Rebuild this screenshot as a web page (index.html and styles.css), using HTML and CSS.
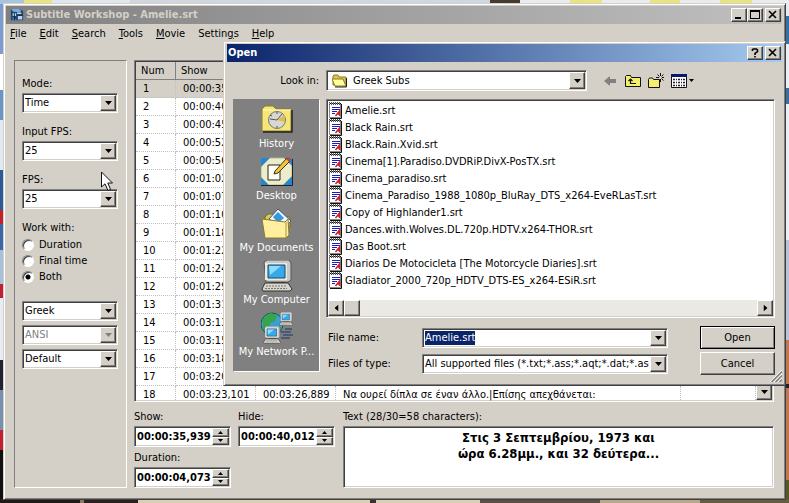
FILE: index.html
```html
<!DOCTYPE html>
<html lang="en">
<head>
<meta charset="utf-8">
<title>Subtitle Workshop - Amelie.srt</title>
<link rel="stylesheet" href="styles.css">
</head>
<body>
<svg class="defs" aria-hidden="true">
  <symbol id="file" viewBox="0 0 16 17">
    <path d="M1.500 1.500h11v14h-11z" fill="#fff" stroke="#888"/>
    <path d="M13.500 2v14.500H2" fill="none" stroke="#111"/>
    <path d="M2 1.500h12" stroke="#111" stroke-dasharray="1 1"/>
    <path d="M1 .5h12M1 2.500h12" stroke="#555" stroke-dasharray="1 1"/>
    <path d="M4 5.500h8M4 7.500h8M4 9.500h5M4 11.500h3" stroke="#1b1bc5"/>
    <path d="M7.500 14L11.500 9v5M9 12h3" fill="none" stroke="#d02020" stroke-width="1.400"/>
  </symbol>
  <symbol id="down" viewBox="0 0 7 4"><path d="M0 0h7L3.500 4z"/></symbol>
  <symbol id="pc" viewBox="0 0 32 32">
    <path d="M3 2l3-2h22l2 3v17l-3 2H5z" fill="#c8c8c8" stroke="#555"/>
    <path d="M4 3h22v17H4z" fill="#eceadf"/>
    <path d="M7 5h17v13H7z" fill="#38a8e8" stroke="#134a70"/>
    <path d="M8 6h12L9 15z" fill="#8fdcff"/>
    <path d="M10 22h14v2H10z" fill="#444"/>
    <path d="M4 23h23l4 6-2 2H2l-1-2z" fill="#d8d5ca" stroke="#333"/>
    <path d="M5 26h20M4 28.500h22" stroke="#777" stroke-dasharray="2 1"/>
  </symbol>
</svg>

<main class="window">
  <header class="titlebar">
    <svg class="app-icon" viewBox="0 0 16 16" aria-hidden="true">
      <path d="M1 2h12l2 2v10H1z" fill="#1d4470"/>
      <path d="M2 1h8l3 2-2 2-8-1z" fill="#77aee0"/>
      <path d="M3 6h4v3H3zM8 5h5v2H8zM9 9h5v4H9z" fill="#b9d5ee"/>
      <path d="M3 10l5 4H3z" fill="#3e8ad2"/>
      <path d="M5 6v8M8 8h6" stroke="#10181f"/>
    </svg>
    <h1>Subtitle Workshop - Amelie.srt</h1>
    <button class="cap" aria-label="Minimize"><svg viewBox="0 0 10 10"><path d="M1 7h6v2H1z"/></svg></button>
    <button class="cap" aria-label="Maximize"><svg viewBox="0 0 10 10"><path d="M0 0h10v9H0zM1 2v6h8V2z" fill-rule="evenodd"/></svg></button>
    <button class="cap cap-close" aria-label="Close"><svg viewBox="0 0 10 10"><path d="M1 1l7 7M8 1L1 8" stroke="#000" stroke-width="1.600"/></svg></button>
  </header>

  <nav class="menu">
    <a href="#"><u>F</u>ile</a>
    <a href="#"><u>E</u>dit</a>
    <a href="#"><u>S</u>earch</a>
    <a href="#"><u>T</u>ools</a>
    <a href="#"><u>M</u>ovie</a>
    <a href="#">Settin<u>g</u>s</a>
    <a href="#"><u>H</u>elp</a>
  </nav>

  <div class="content">
    <aside class="panel">
      <label for="mode">Mode:</label>
      <span class="combo"><select id="mode"><option>Time</option></select><i class="drop"><svg><use href="#down"/></svg></i></span>
      <label for="infps">Input FPS:</label>
      <span class="combo"><select id="infps"><option>25</option></select><i class="drop"><svg><use href="#down"/></svg></i></span>
      <label for="fps">FPS:</label>
      <span class="combo"><select id="fps"><option>25</option></select><i class="drop"><svg><use href="#down"/></svg></i></span>
      <fieldset>
        <legend>Work with:</legend>
        <label><input type="radio" name="work">Duration</label>
        <label><input type="radio" name="work">Final time</label>
        <label><input type="radio" name="work" checked>Both</label>
      </fieldset>
      <div class="charsets">
        <span class="combo"><select aria-label="Original charset"><option>Greek</option></select><i class="drop"><svg><use href="#down"/></svg></i></span>
        <span class="combo off"><select aria-label="Encoding" disabled><option>ANSI</option></select><i class="drop"><svg><use href="#down"/></svg></i></span>
        <span class="combo"><select aria-label="Translation charset"><option>Default</option></select><i class="drop"><svg><use href="#down"/></svg></i></span>
      </div>
    </aside>

    <section class="editor">
      <div class="grid sunken">
        <table>
          <colgroup><col class="c-num"><col class="c-time"><col class="c-time"><col class="c-text"><col></colgroup>
          <thead><tr><th>Num</th><th>Show</th><th></th><th></th><th></th></tr></thead>
          <tbody>
            <tr class="current"><td>1</td><td>00:00:35</td><td></td><td></td><td></td></tr>
            <tr><td>2</td><td>00:00:40</td><td></td><td></td><td></td></tr>
            <tr><td>3</td><td>00:00:45</td><td></td><td></td><td></td></tr>
            <tr><td>4</td><td>00:00:52</td><td></td><td></td><td></td></tr>
            <tr><td>5</td><td>00:00:56</td><td></td><td></td><td></td></tr>
            <tr><td>6</td><td>00:01:02</td><td></td><td></td><td></td></tr>
            <tr><td>7</td><td>00:01:07</td><td></td><td></td><td></td></tr>
            <tr><td>8</td><td>00:01:10</td><td></td><td></td><td></td></tr>
            <tr><td>9</td><td>00:01:18</td><td></td><td></td><td></td></tr>
            <tr><td>10</td><td>00:01:22</td><td></td><td></td><td></td></tr>
            <tr><td>11</td><td>00:01:24</td><td></td><td></td><td></td></tr>
            <tr><td>12</td><td>00:01:29</td><td></td><td></td><td></td></tr>
            <tr><td>13</td><td>00:01:31</td><td></td><td></td><td></td></tr>
            <tr><td>14</td><td>00:03:13</td><td></td><td></td><td></td></tr>
            <tr><td>15</td><td>00:03:15</td><td></td><td></td><td></td></tr>
            <tr><td>16</td><td>00:03:18</td><td></td><td></td><td></td></tr>
            <tr><td>17</td><td>00:03:20</td><td></td><td></td><td></td></tr>
            <tr><td>18</td><td>00:03:23,101</td><td>00:03:26,889</td><td>Να ουρεί δίπλα σε έναν άλλο.|Επίσης απεχθάνεται:</td><td></td></tr>
          </tbody>
        </table>
        <div class="vscroll"><button class="drop" aria-label="Scroll down"><svg><use href="#down"/></svg></button></div>
      </div>

      <div class="fields">
        <div class="times">
          <div><label for="show">Show:</label>
            <span class="spin sunken"><input id="show" value="00:00:35,939"><span class="steps"><button aria-label="Show up"><svg class="up"><use href="#down"/></svg></button><button aria-label="Show down"><svg><use href="#down"/></svg></button></span></span></div>
          <div><label for="hide">Hide:</label>
            <span class="spin sunken"><input id="hide" value="00:00:40,012"><span class="steps"><button aria-label="Hide up"><svg class="up"><use href="#down"/></svg></button><button aria-label="Hide down"><svg><use href="#down"/></svg></button></span></span></div>
          <div><label for="dur">Duration:</label>
            <span class="spin sunken"><input id="dur" value="00:00:04,073"><span class="steps"><button aria-label="Duration up"><svg class="up"><use href="#down"/></svg></button><button aria-label="Duration down"><svg><use href="#down"/></svg></button></span></span></div>
        </div>
        <div class="textbox">
          <label for="text">Text (28/30=58 characters):</label>
          <textarea id="text" class="sunken">Στις 3 Σεπτεμβρίου, 1973 και
ώρα 6.28μμ., και 32 δεύτερα...</textarea>
        </div>
      </div>
    </section>
  </div>
</main>

<section class="dialog" role="dialog" aria-labelledby="dlg-title">
  <header class="titlebar active">
    <h2 id="dlg-title">Open</h2>
    <button class="cap" aria-label="Help"><svg viewBox="0 0 10 10"><path d="M2.500 3V1.500L3.500 1h3l1 1v1.500L5 5.500V7M5 8v1.500" fill="none" stroke="#000" stroke-width="1.600"/></svg></button>
    <button class="cap cap-close" aria-label="Close dialog"><svg viewBox="0 0 10 10"><path d="M1 1l7 7M8 1L1 8" stroke="#000" stroke-width="1.600"/></svg></button>
  </header>

  <div class="lookin">
    <label for="look">Look in:</label>
    <span class="combo">
      <svg class="folder" viewBox="0 0 16 14" aria-hidden="true"><path d="M1 11V2l1-1h4l1 2h7v9z" fill="#d8c850" stroke="#8a7a20"/><path d="M0 5h11l3 7H3z" fill="#ffff9c" stroke="#8a7a20"/><path d="M14.500 4v9H3" fill="none" stroke="#222"/></svg>
      <select id="look"><option>Greek Subs</option></select><i class="drop"><svg><use href="#down"/></svg></i></span>
    <div class="tools">
      <button aria-label="Back"><svg viewBox="0 0 16 16"><path d="M2 8l6-5v3h6v4H8v3z" fill="#808080"/></svg></button>
      <button aria-label="Up one level"><svg viewBox="0 0 16 16"><path d="M.5 13.500v-10l1-1h4l1 2h9v9z" fill="#f4f06c" stroke="#111"/><path d="M5.500 6v4.500H11M3.500 8l2-2 2 2" fill="none" stroke="#111" stroke-width="1.200"/></svg></button>
      <button aria-label="New folder"><svg viewBox="0 0 16 16"><path d="M.5 14.500v-8l1-1.500h3l1 1.500h6v8z" fill="#f4f06c" stroke="#111"/><path d="M12.500 0v3M12.500 6v3M8 4.500h3M14 4.500h2M9.500 1.500l2 2M15.500 1.500l-2 2M15.500 7.500l-2-2" stroke="#111"/></svg></button>
      <button class="views" aria-label="Views"><svg viewBox="0 0 16 14"><path d="M.5.5h15v13H.5z" fill="#fff" stroke="#111"/><path d="M0 0h16v3H0z" fill="#0a1a6a"/><path d="M2 5.500h12M2 8.500h12M2 11.500h12" stroke="#223" stroke-width="1.500" stroke-dasharray="2 1 1 1"/></svg><svg class="tri"><use href="#down"/></svg></button>
    </div>
  </div>

  <div class="browse">
    <nav class="places">
      <a href="#"><svg viewBox="0 0 32 32"><path d="M1 27V5l3-3h8l3 3h15v22z" fill="#f5e67a" stroke="#8f7c22"/><path d="M2 6h28" stroke="#fffbc8"/><path d="M31 6v22H2" fill="none" stroke="#222" stroke-width="1.500"/><circle cx="16" cy="16" r="8.500" fill="#d8d8d0" stroke="#777"/><path d="M16 16l8-5v7z" fill="#e3b94a"/><path d="M16 16l-7-1M16 16l5-6M16 8v2M16 22v2M9 11l2 1" stroke="#555"/></svg>History</a>
      <a href="#"><svg viewBox="0 0 32 32"><path d="M0 2h31v27H0z" fill="#f2efc4"/><path d="M0 2h9L0 11zM31 20v9H22zM0 21l8 8H0zM31 2h-8l8 8z" fill="#2387d8"/><path d="M9 2L0 11v10l8 8h14l9-9V10l-8-8z" fill="#eceecb" stroke="#b3b58b"/><path d="M31.500 3v26.500H0" fill="none" stroke="#222"/><path d="M7 9h12v15H7z" fill="#fffef0" stroke="#222"/><path d="M14 15L26 2l3 3-12 12-4 1z" fill="#f6c431" stroke="#333"/><path d="M25 3l2-2 3 3-2 2z" fill="#d93820"/></svg>Desktop</a>
      <a href="#"><svg viewBox="0 0 32 32"><path d="M4 9l3-3h6l2 3h14v10H4z" fill="#d9c956" stroke="#7c6c1c"/><path d="M8 11L17 1l13 12-8 9z" fill="#e9f6ff" stroke="#557"/><path d="M12 9l5-5 6 6-6 5z" fill="#3398de"/><path d="M1 11l23 3 3-3 1 16-3 3H4z" fill="#fff0a0" stroke="#8a7a28"/><path d="M25 14v16" stroke="#a89338"/></svg>My Documents</a>
      <a href="#"><svg><use href="#pc"/></svg>My Computer</a>
      <a href="#"><svg viewBox="0 0 32 32"><circle cx="11" cy="12" r="11" fill="#3a9fd6" stroke="#125a42"/><path d="M2 7l7-6 7 2-2 6-5 2-1 6-6 1zM12 14l8 1-3 7-6-1z" fill="#36a447"/><svg class="pc-far" x="18" y="0" width="14" height="14"><use href="#pc"/></svg><svg class="pc-near" x="2" y="14" width="18" height="18"><use href="#pc"/></svg><path d="M20 20h10M22 23h10M20 26h9M24 17h7" stroke="#12306a"/></svg>My Network P...</a>
    </nav>
    <div class="files sunken">
      <ul>
        <li><svg><use href="#file"/></svg>Amelie.srt</li>
        <li><svg><use href="#file"/></svg>Black Rain.srt</li>
        <li><svg><use href="#file"/></svg>Black.Rain.Xvid.srt</li>
        <li><svg><use href="#file"/></svg>Cinema[1].Paradiso.DVDRiP.DivX-PosTX.srt</li>
        <li><svg><use href="#file"/></svg>Cinema_paradiso.srt</li>
        <li><svg><use href="#file"/></svg>Cinema_Paradiso_1988_1080p_BluRay_DTS_x264-EveRLasT.srt</li>
        <li><svg><use href="#file"/></svg>Copy of Highlander1.srt</li>
        <li><svg><use href="#file"/></svg>Dances.with.Wolves.DL.720p.HDTV.x264-THOR.srt</li>
        <li><svg><use href="#file"/></svg>Das Boot.srt</li>
        <li><svg><use href="#file"/></svg>Diarios De Motocicleta [The Motorcycle Diaries].srt</li>
        <li><svg><use href="#file"/></svg>Gladiator_2000_720p_HDTV_DTS-ES_x264-ESiR.srt</li>
      </ul>
      <div class="hscroll">
        <button class="drop" aria-label="Scroll left"><svg class="left"><use href="#down"/></svg></button>
        <span class="thumb"></span>
        <button class="drop end" aria-label="Scroll right"><svg class="right"><use href="#down"/></svg></button>
      </div>
    </div>

    <form class="choose">
      <label for="fname">File name:</label>
      <span class="combo"><input id="fname" value="Amelie.srt"><i class="drop"><svg><use href="#down"/></svg></i></span>
      <button class="push default" type="button">Open</button>
      <label for="ftype">Files of type:</label>
      <span class="combo"><select id="ftype"><option>All supported files (*.txt;*.ass;*.aqt;*.dat;*.asc;*.dks)</option></select><i class="drop"><svg><use href="#down"/></svg></i></span>
      <button class="push" type="button">Cancel</button>
    </form>
  </div>
  <svg class="grip" viewBox="0 0 12 12" aria-hidden="true"><path d="M0 12L12 0M4 12l8-8M8 12l4-4" stroke="#fff"/><path d="M1.500 12L12 1.500M5.500 12L12 5.500M9.500 12L12 9.500" stroke="#808080" stroke-width="1.500"/></svg>
</section>

<svg class="pointer" viewBox="0 0 12 20" aria-hidden="true"><path d="M.5 1v15l3.500-3.200L7 19.500l2.500-1.200L6.800 12h4.700z" fill="#fff" stroke="#111"/></svg>
<script src="script.js"></script>
</body>
</html>
```

FILE: styles.css
```css
* { box-sizing: border-box; }

:root {
  --face: #d4d0c8;
  --shadow: #808080;
  --dark: #404040;
}

body {
  margin: 0;
  height: 100vh;
  padding: 3px;
  display: flex;
  overflow: hidden;
  position: relative;
  color: #000;
  font: 11px/14px "DejaVu Sans Condensed", "DejaVu Sans", sans-serif;
  background:
    linear-gradient(90deg, #a8c4e0 0 24px, #e8e480 24px 52px, #dfe8f0 52px 130px, #cfd8e0 130px 490px, #443c30 490px 520px, #e8ecf0 520px 570px, #e8e480 570px 602px, #e8ecf0 602px 650px, #e8e480 650px 680px, #e8ecf0 680px 720px, #e8e480 720px 752px, #e8ecf0 752px) 0 0 / 100% 4px no-repeat,
    linear-gradient(90deg, #201a18 0 80px, #8c7a60 80px 84px, #2b2220 84px 138px, #d8d0b0 138px 370px, #3a302c 370px 376px, #d8d0b0 376px 480px, #5b5244 480px 600px, #b8a888 600px 700px, #665c40 700px) 0 100% / 100% 4px no-repeat,
    linear-gradient(#7a9cd0 0 54px, #fff 54px 90px, #6a94c8 90px 120px, #e0e8f4 120px 170px, #2c5c98 170px 210px, #c02030 210px 224px, #3868a8 224px 250px, #a8c0dc 250px 284px, #c02030 284px 298px, #e8ecf4 298px 360px, #223 360px 390px, #7890b0 390px 430px, #c02030 430px 450px, #101010 450px) 0 0 / 4px 100% no-repeat,
    linear-gradient(#e8ecf0 0 16px, #3870a8 16px 44px, #e8f0f8 44px 88px, #3870a8 88px 104px, #e8f0f8 104px 240px, #b8c4dc 240px 340px, #c07850 340px 384px, #222 384px 388px, #c07850 388px 480px, #5a5a20 480px) 100% 0 / 4px 100% no-repeat,
    #8aa0b8;
}

.defs { position: absolute; width: 0; height: 0; }
button, input, select, textarea { font: inherit; color: inherit; margin: 0; border-radius: 0; }
button { padding: 0; background: var(--face); }
h1, h2 { margin: 0; flex: 1; font-size: 11px; line-height: 18px; }
a { color: inherit; text-decoration: none; }
i { font-style: normal; }

/* raised frames */
.window, .dialog {
  background: var(--face);
  border: 1px solid;
  border-color: var(--face) var(--dark) var(--dark) var(--face);
  box-shadow: inset 1px 1px #fff, inset -1px -1px var(--shadow);
}
.window { flex: 1; min-width: 0; display: flex; flex-direction: column; padding: 2px 3px 11px 2px; }

.sunken, .combo, .places {
  border: 1px solid;
  border-color: var(--shadow) #fff #fff var(--shadow);
}
.sunken, .combo { background: #fff; box-shadow: inset 1px 1px var(--dark), inset -1px -1px var(--face); }

/* title bars */
.titlebar {
  display: flex;
  align-items: center;
  height: 18px;
  padding: 0 1px 0 4px;
  color: var(--face);
  background: linear-gradient(90deg, #808080, #c0c0c0);
}
.titlebar.active { padding-left: 1px; color: #fff; background: linear-gradient(90deg, #0a246a, #a6caf0); }
.app-icon { width: 14px; height: 14px; margin-right: 2px; }
.cap, .drop, .thumb, .steps button, .push {
  border: 1px solid;
  border-color: #fff var(--dark) var(--dark) #fff;
  box-shadow: inset -1px -1px var(--shadow);
  background: var(--face);
}
.cap { width: 16px; height: 14px; display: grid; place-items: center; }
.cap svg { width: 10px; height: 10px; }
.cap-close { margin-left: 2px; }

.menu { display: flex; gap: 13px; padding: 3px 4px; }

.content { flex: 1; min-height: 0; display: flex; gap: 7px; padding: 16px 8px 0 8px; }

/* left panel */
.panel {
  width: 113px;
  flex: none;
  display: flex;
  flex-direction: column;
  padding: 16px 8px 0 7px;
  border: 1px solid;
  border-color: var(--shadow) #fff #fff var(--shadow);
}
.panel > label { margin-bottom: 2px; }
.panel > .combo { margin-bottom: 12px; }
.combo { display: flex; align-items: center; height: 20px; padding: 1px; min-width: 0; }
.combo select, .combo input { appearance: none; border: 0; outline: 0; flex: 1; min-width: 0; padding: 0 1px; background: none; height: 14px; line-height: 14px; }
.combo select:disabled { color: var(--shadow); opacity: 1; }
.drop { width: 16px; flex: none; align-self: stretch; display: grid; place-items: center; pointer-events: none; padding: 0; }
.drop svg { width: 7px; height: 4px; }
.off .drop svg { fill: var(--shadow); }
fieldset { border: 0; margin: 0; padding: 0; display: flex; flex-direction: column; }
legend { padding: 0; margin-bottom: 2px; }
fieldset label { display: flex; align-items: center; gap: 5px; height: 16px; }
input[type="radio"] {
  appearance: none;
  width: 12px;
  height: 12px;
  border-radius: 50%;
  border: 1px solid;
  border-color: var(--shadow) #fff #fff var(--shadow);
  background: #fff;
  box-shadow: inset 1px 1px var(--dark);
}
input[type="radio"]:checked { background: radial-gradient(circle, #000 2px, #fff 3px); }
.charsets { display: flex; flex-direction: column; gap: 4px; margin-top: 16px; }

/* subtitle grid */
.editor { flex: 1; min-width: 0; display: flex; flex-direction: column; }
.grid { display: flex; flex: 1; min-height: 0; overflow: hidden; padding: 1px; }
table { flex: 1; border-collapse: separate; border-spacing: 0; table-layout: fixed; width: 100%; height: max-content; }
.c-num { width: 40px; }
.c-time { width: 80px; }
.c-text { width: 345px; }
th, td { height: 18px; padding: 0 0 0 7px; text-align: left; font-weight: normal; white-space: nowrap; overflow: hidden; }
td { border-right: 1px dotted #c0c0c0; border-bottom: 1px dotted #c0c0c0; }
th { padding-left: 5px; background: var(--face); border-right: 1px solid var(--shadow); border-bottom: 1px solid var(--shadow); }
.current td { background: var(--face); }
.vscroll { width: 16px; display: flex; flex-direction: column; justify-content: flex-end; }
.vscroll .drop { height: 16px; }

/* editing fields */
.fields { display: flex; gap: 8px; padding-top: 8px; }
.times { display: grid; grid-template-columns: 97px 97px; column-gap: 7px; row-gap: 4px; }
.times label, .textbox label { display: block; margin-bottom: 2px; }
.spin { display: flex; height: 21px; padding: 1px; }
.spin input { flex: 1; min-width: 0; border: 0; outline: 0; padding: 0 0 0 1px; background: none; font-weight: bold; }
.steps { width: 17px; display: flex; flex-direction: column; }
.steps button { flex: 1; min-height: 0; display: grid; place-items: center; }
.steps svg { width: 5px; height: 3px; }
.up { transform: rotate(180deg); }
.textbox { flex: 1; display: flex; flex-direction: column; }
textarea { flex: 1; width: 100%; resize: none; outline: 0; padding: 3px 2px; text-align: center; font-weight: bold; font-size: 13px; line-height: 16px; overflow: hidden; }

/* open dialog */
.dialog { position: absolute; left: 223px; top: 41px; right: 3px; padding: 2px 3px 10px 3px; }
.lookin { display: grid; grid-template-columns: 92px 261px 1fr; align-items: center; column-gap: 7px; padding: 8px 0; }
.lookin > label { text-align: right; }
.lookin .combo { height: 21px; }
.folder { width: 16px; height: 14px; margin: 0 4px; }
.tools { display: flex; gap: 7px; padding-left: 8px; }
.tools button { border: 0; display: flex; align-items: center; gap: 2px; }
.tools svg { width: 16px; height: 16px; }
.tools .tri { width: 5px; height: 3px; }

.browse { display: grid; grid-template-columns: 87px 1fr; grid-template-rows: 219px auto; column-gap: 6px; row-gap: 8px; padding: 0 7px 0 6px; }
.places { grid-row: 1 / 3; height: 273px; background: var(--shadow); color: #fff; display: flex; flex-direction: column; padding: 4px 0; }
.places a { display: flex; flex-direction: column; align-items: center; height: 52px; white-space: nowrap; }
.places svg { width: 32px; height: 32px; flex: none; }
.places .pc-far { width: 14px; height: 14px; }
.places .pc-near { width: 18px; height: 18px; }
.places > a > svg { margin-bottom: 1px; }
.files { min-width: 0; padding: 1px; display: flex; flex-direction: column; justify-content: space-between; }
ul { list-style: none; margin: 0; padding: 1px 0; }
li { display: flex; align-items: center; gap: 1px; height: 17px; white-space: nowrap; }
li svg { width: 16px; height: 17px; flex: none; }
.hscroll { display: flex; height: 16px; background: #ebe9e4; }
.thumb { width: 16px; }
.end { margin-left: auto; }
.left { transform: rotate(90deg); }
.right { transform: rotate(-90deg); }

.choose { display: grid; grid-template-columns: 96px 246px 75px; column-gap: 0; align-items: center; row-gap: 3px; }
.choose > label { padding-left: 2px; }
.push { height: 23px; grid-column: 3; justify-self: end; width: 75px; }
.choose { grid-template-columns: 96px 246px 1fr; }
.default { outline: 1px solid #000; outline-offset: -1px; border-color: #000; box-shadow: inset 1px 1px #fff, inset -1px -1px var(--shadow); }
::selection { color: #fff; background: #0a246a; }
.grip { position: absolute; right: 3px; bottom: 3px; width: 12px; height: 12px; }

.pointer { position: absolute; left: 101px; top: 171px; width: 12px; height: 20px; }
```

FILE: script.js
```js
const fileName = document.getElementById("fname");
fileName.focus();
fileName.select();
```
